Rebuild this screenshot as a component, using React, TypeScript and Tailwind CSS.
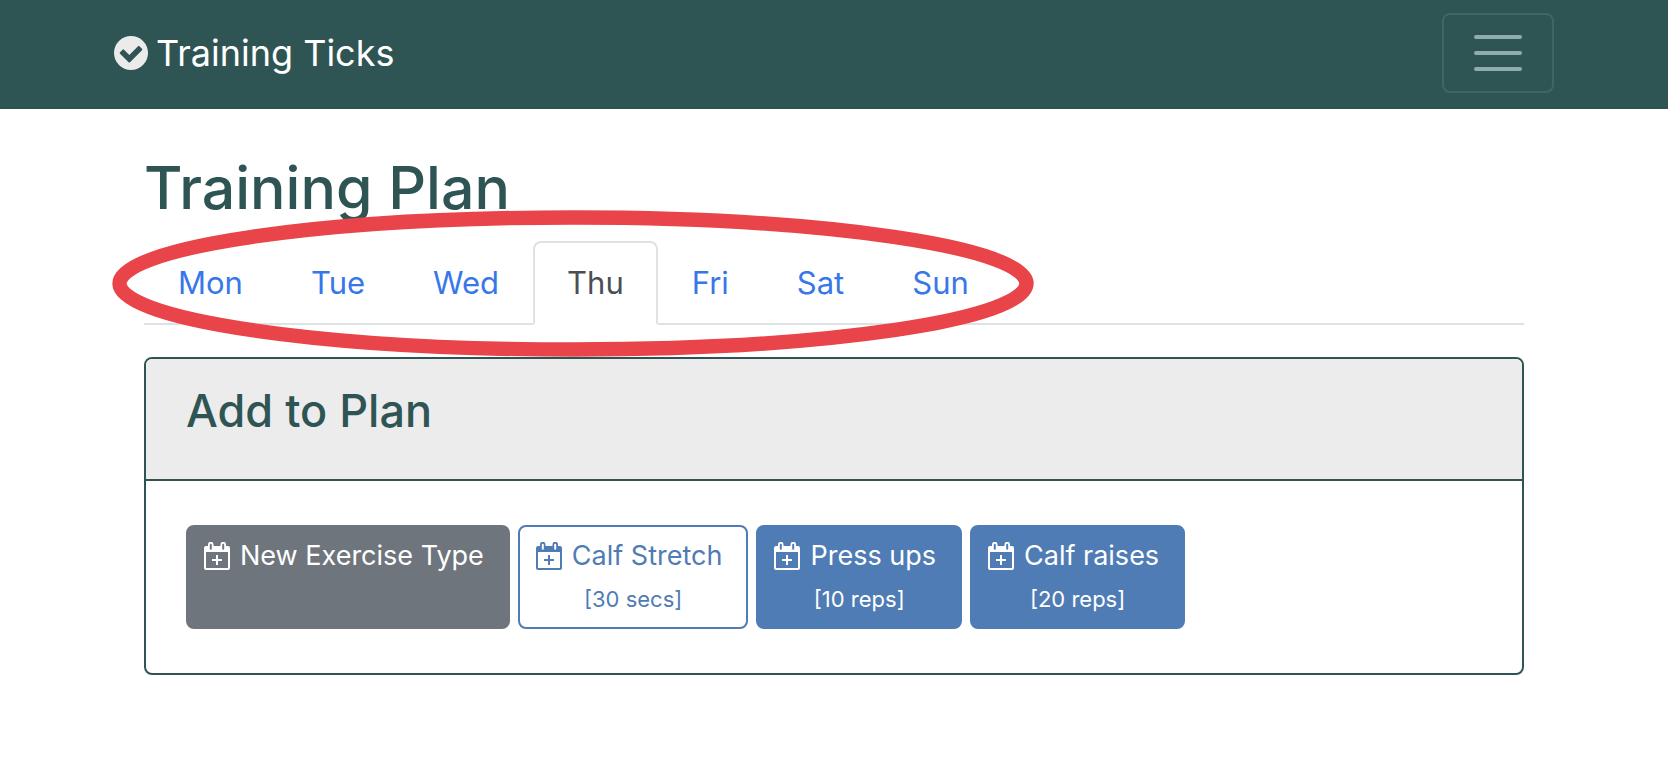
const days = ["Mon", "Tue", "Wed", "Thu", "Fri", "Sat", "Sun"];

type Exercise = { name: string; amount?: string; tone: string };

const exercises: Exercise[] = [
  { name: "New Exercise Type", tone: "border-[#6f757d] bg-[#6f757d] text-white" },
  { name: "Calf Stretch", amount: "[30 secs]", tone: "border-[#4f7cb4] bg-white text-[#4f7cb4]" },
  { name: "Press ups", amount: "[10 reps]", tone: "border-[#4f7cb4] bg-[#4f7cb4] text-white" },
  { name: "Calf raises", amount: "[20 reps]", tone: "border-[#4f7cb4] bg-[#4f7cb4] text-white" },
];

function CheckCircle() {
  return (
    <svg viewBox="0 0 34 34" className="size-[34px]" aria-hidden="true">
      <circle cx="17" cy="17" r="17" fill="#ebebeb" />
      <path
        d="M6 16.300 8.600 13.700Q9.300 13 10 13.700L15.300 18.900 24 10.200Q24.700 9.500 25.400 10.200L28 12.800Q28.700 13.500 28 14.200L16 26.200Q15.300 26.900 14.600 26.200L6 17.700Q5.300 17 6 16.300Z"
        fill="#2f5454"
      />
    </svg>
  );
}

function CalendarPlus() {
  return (
    <svg viewBox="0 0 26 28" className="h-7 w-[26px]" aria-hidden="true" fill="currentColor">
      <path
        fillRule="evenodd"
        d="M2 4H4V2.500a2.500 2.500 0 0 1 5.500 0V4h7V2.500a2.500 2.500 0 0 1 5.500 0V4H24a2 2 0 0 1 2 2v20a2 2 0 0 1-2 2H2a2 2 0 0 1-2-2V6a2 2 0 0 1 2-2ZM2 10v16h22V10ZM5.800 2.800v4a1 1 0 0 0 2 0v-4a1 1 0 0 0-2 0ZM18.200 2.800v4a1 1 0 0 0 2 0v-4a1 1 0 0 0-2 0Z"
      />
      <path d="M12 13h2v4h4v2h-4v4h-2v-4H8v-2h4Z" />
    </svg>
  );
}

export default function App() {
  return (
    <div className="min-h-screen bg-white font-['Inter','Liberation_Sans',sans-serif] text-[#2f5454]">
      <header className="border-b-2 border-[#2c534c] bg-[#2f5454] pt-[13px] pb-3.5">
        <div className="mx-auto flex max-w-[1440px] items-center justify-between">
          <a href="#" className="flex items-center gap-2 text-[36px] leading-[60px] text-white">
            <CheckCircle />
            Training Ticks
          </a>
          <button
            type="button"
            aria-label="Toggle navigation"
            className="flex h-20 w-28 items-center justify-center rounded-lg border-2 border-[#41655f]"
          >
            <svg viewBox="0 0 30 30" className="size-[60px]" aria-hidden="true">
              <path d="M4 7h22M4 15h22M4 23h22" stroke="#8fadad" strokeWidth="2" strokeLinecap="round" />
            </svg>
          </button>
        </div>
      </header>

      <main className="mx-auto max-w-[1440px] px-[30px] pt-10">
        <h1 className="text-[59px] leading-[78px] font-medium">Training Plan</h1>

        <div className="relative mt-3.5">
          <nav className="flex border-b-2 border-[#dfe2e5]">
            {days.map((day) => (
              <a
                key={day}
                href={"#" + day}
                aria-current={day === "Thu" ? "page" : undefined}
                className={
                  day === "Thu"
                    ? "-mb-0.5 rounded-t-lg border-2 border-[#dfe2e5] border-b-white bg-white px-8 py-4 text-[31px] leading-[48px] text-[#4a4f55]"
                    : "-mb-0.5 border-2 border-transparent px-8 py-4 text-[31px] leading-[48px] text-[#3877ea]"
                }
              >
                {day}
              </a>
            ))}
          </nav>
          <svg
            viewBox="0 0 922 148"
            className="pointer-events-none absolute -top-8 -left-8 h-[148px] w-[922px]"
            aria-hidden="true"
          >
            <ellipse cx="461" cy="74.500" rx="453.500" ry="66" fill="none" stroke="#e8444a" strokeWidth="14.400" />
          </svg>
        </div>

        <section className="mt-8 rounded-lg border-2 border-[#2f5454]">
          <div className="rounded-t-md border-b-2 border-[#2f5454] bg-[#ececec] px-10 pt-6 pb-10">
            <h2 className="text-[45px] leading-[56px] font-medium">Add to Plan</h2>
          </div>
          <div className="flex flex-wrap gap-2 px-10 py-11">
            {exercises.map((item) => (
              <button
                key={item.name}
                type="button"
                className={"flex min-h-[104px] flex-col items-center rounded-lg border-2 px-4 pt-2 pb-1.5 " + item.tone}
              >
                <span className="flex items-center gap-2.5 pr-2 text-[27px] leading-[42px]">
                  <CalendarPlus />
                  {item.name}
                </span>
                {item.amount && <span className="text-[22px] leading-[44px]">{item.amount}</span>}
              </button>
            ))}
          </div>
        </section>
      </main>
    </div>
  );
}
